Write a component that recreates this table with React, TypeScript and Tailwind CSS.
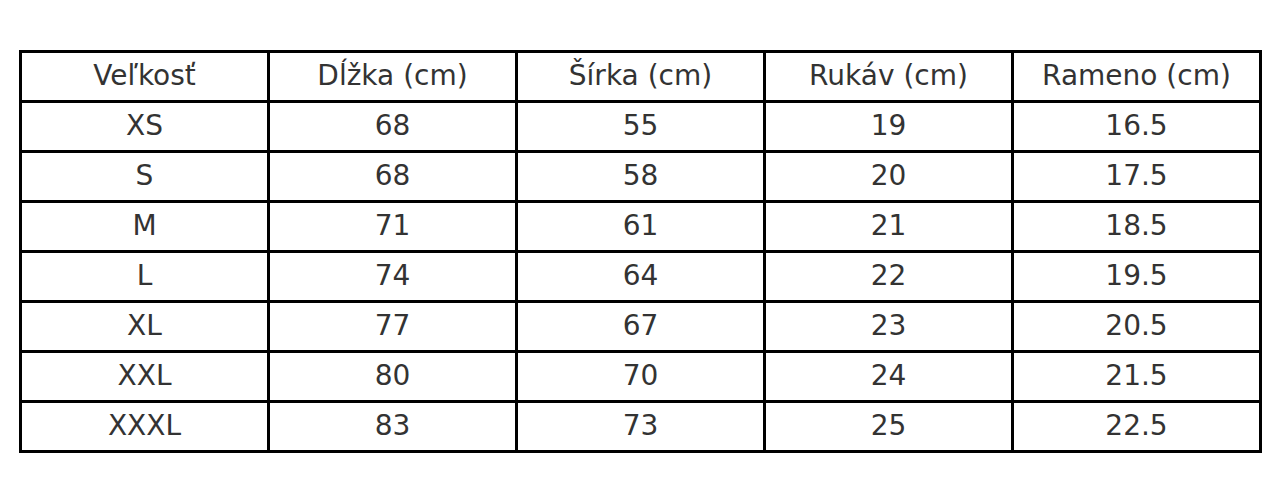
export default function App() {
  const head = ["Veľkosť", "Dĺžka (cm)", "Šírka (cm)", "Rukáv (cm)", "Rameno (cm)"];
  const rows = [
    ["XS", "68", "55", "19", "16.5"],
    ["S", "68", "58", "20", "17.5"],
    ["M", "71", "61", "21", "18.5"],
    ["L", "74", "64", "22", "19.5"],
    ["XL", "77", "67", "23", "20.5"],
    ["XXL", "80", "70", "24", "21.5"],
    ["XXXL", "83", "73", "25", "22.5"],
  ];
  return (
    <div className="w-[1280px] h-[502px] bg-white pt-[50px] pl-[19px]" style={{ fontFamily: '"DejaVu Sans", sans-serif' }}>
      <table className="border-collapse w-[1243px] table-fixed text-[28px] text-[#333]">
        <tbody>
          <tr className="h-[50px]">
            {head.map((h) => (
              <td key={h} className="border-[3px] border-black text-center p-0 pb-[1px] leading-none">{h}</td>
            ))}
          </tr>
          {rows.map((r) => (
            <tr key={r[0]} className="h-[50px]">
              {r.map((c, i) => (
                <td key={i} className="border-[3px] border-black text-center p-0 pb-[1px] leading-none">{c}</td>
              ))}
            </tr>
          ))}
        </tbody>
      </table>
    </div>
  );
}
